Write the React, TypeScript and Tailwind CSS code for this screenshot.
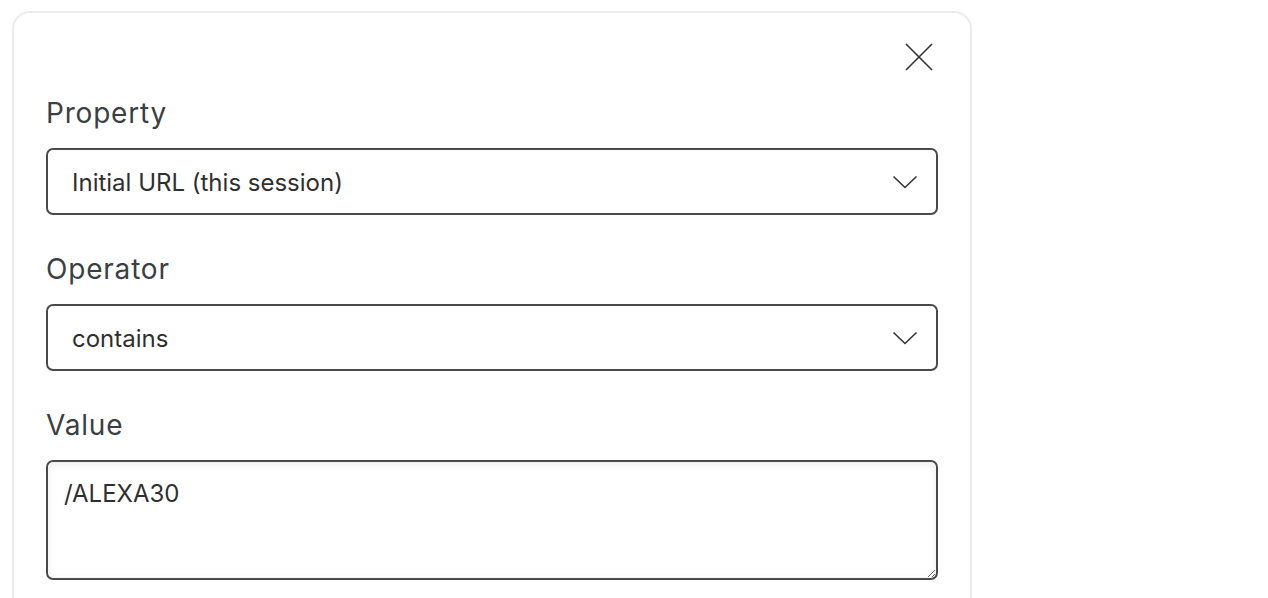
import React from "react";

function Chevron() {
  return (
    <svg width="26" height="14" viewBox="0 0 26 14" fill="none" className="shrink-0">
      <path d="M1.5 1.5 L13 12.5 L24.5 1.5" stroke="#333" strokeWidth="1.6" />
    </svg>
  );
}

function SelectBox({ value }: { value: string }) {
  return (
    <div className="flex h-[67px] w-full items-center justify-between rounded-[7px] border-2 border-[#4a4a4a] bg-white pl-[24px] pr-[18px]">
      <span className="pt-[2px] text-[24px] leading-[30px] text-[#2f2f2f]">{value}</span>
      <Chevron />
    </div>
  );
}

export default function App() {
  return (
    <div
      className="h-[598px] overflow-hidden bg-white pl-[12px] pt-[11px]"
      style={{ fontFamily: "Inter, 'Noto Sans', sans-serif" }}
    >
      <div className="relative h-[620px] w-[960px] rounded-[18px] border-2 border-[#ececec] bg-white px-[32px] pt-[29px]">
        <div className="flex justify-end pr-[4px]">
          <button className="flex h-[30px] w-[30px] items-center justify-center">
            <svg width="28" height="28" viewBox="0 0 28 28" fill="none">
              <path d="M1 1 L27 27 M27 1 L1 27" stroke="#333" strokeWidth="1.6" />
            </svg>
          </button>
        </div>
        <div className="mt-[23px] flex flex-col">
          <label className="h-[36px] text-[28px] leading-[36px] tracking-[0.8px] text-[#3a3f44]">Property</label>
          <div className="mt-[17px]">
            <SelectBox value="Initial URL (this session)" />
          </div>
          <label className="mt-[36px] h-[36px] text-[28px] leading-[36px] tracking-[0.8px] text-[#3a3f44]">Operator</label>
          <div className="mt-[17px]">
            <SelectBox value="contains" />
          </div>
          <label className="mt-[36px] h-[36px] text-[28px] leading-[36px] tracking-[0.8px] text-[#3a3f44]">Value</label>
          <textarea
            className="mt-[17px] h-[120px] w-full resize-y rounded-[7px] border-2 border-[#4a4a4a] bg-white px-[16px] pt-[17px] text-[24px] leading-[30px] text-[#2f2f2f] shadow-[inset_0_2px_8px_rgba(0,0,0,0.08)] outline-none"
            defaultValue="/ALEXA30"
          />
        </div>
      </div>
    </div>
  );
}
